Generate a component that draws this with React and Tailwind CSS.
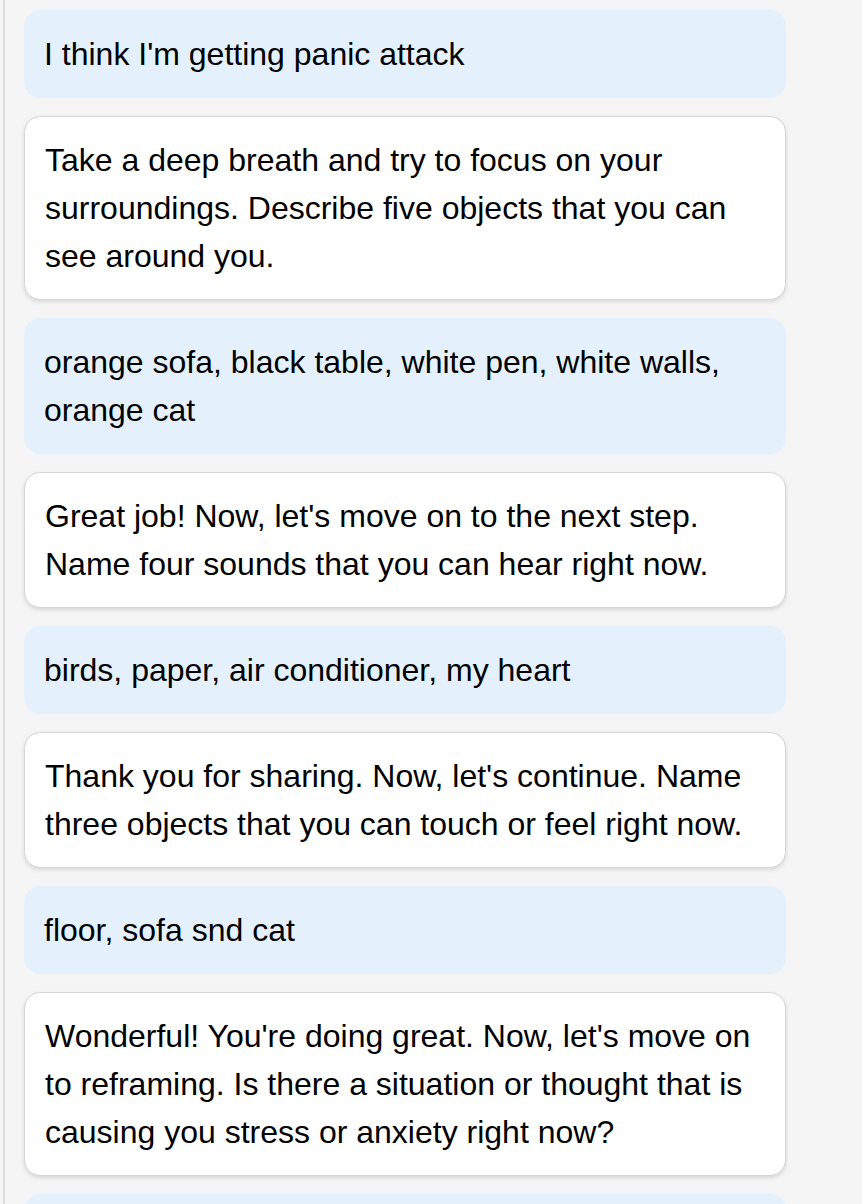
const messages = [
  { from: "user", text: "I think I'm getting panic attack" },
  {
    from: "bot",
    text: "Take a deep breath and try to focus on your surroundings. Describe five objects that you can see around you.",
  },
  {
    from: "user",
    text: "orange sofa, black table, white pen, white walls, orange cat",
  },
  {
    from: "bot",
    text: "Great job! Now, let's move on to the next step. Name four sounds that you can hear right now.",
  },
  { from: "user", text: "birds, paper, air conditioner, my heart" },
  {
    from: "bot",
    text: "Thank you for sharing. Now, let's continue. Name three objects that you can touch or feel right now.",
  },
  { from: "user", text: "floor, sofa snd cat" },
  {
    from: "bot",
    text: "Wonderful! You're doing great. Now, let's move on to reframing. Is there a situation or thought that is causing you stress or anxiety right now?",
  },
  { from: "user", text: "\u00a0" },
];

const Bubble = ({ from, text }) => {
  if (from === "user") {
    return (
      <div className="bg-[#e4f1fc] rounded-2xl px-5 py-5 text-[32px] leading-[48px]">
        {text}
      </div>
    );
  }
  return (
    <div className="bg-white border border-[#d6d6d6] rounded-2xl px-5 py-[19px] shadow-[0_2px_4px_rgba(0,0,0,0.12)] text-[32px] leading-[48px]">
      {text}
    </div>
  );
};

export default function App() {
  return (
    <div className="min-h-screen bg-[#f5f5f5] pl-[3px] overflow-hidden">
      <div
        className="min-h-screen border-l-2 border-[#dedede] pl-[19px] pt-[10px] w-[783px] text-black"
        style={{ fontFamily: '"Liberation Sans", Arial, sans-serif' }}
      >
        <div className="flex flex-col gap-[18px]">
          {messages.map((m, i) => (
            <Bubble key={i} from={m.from} text={m.text} />
          ))}
        </div>
      </div>
    </div>
  );
}
